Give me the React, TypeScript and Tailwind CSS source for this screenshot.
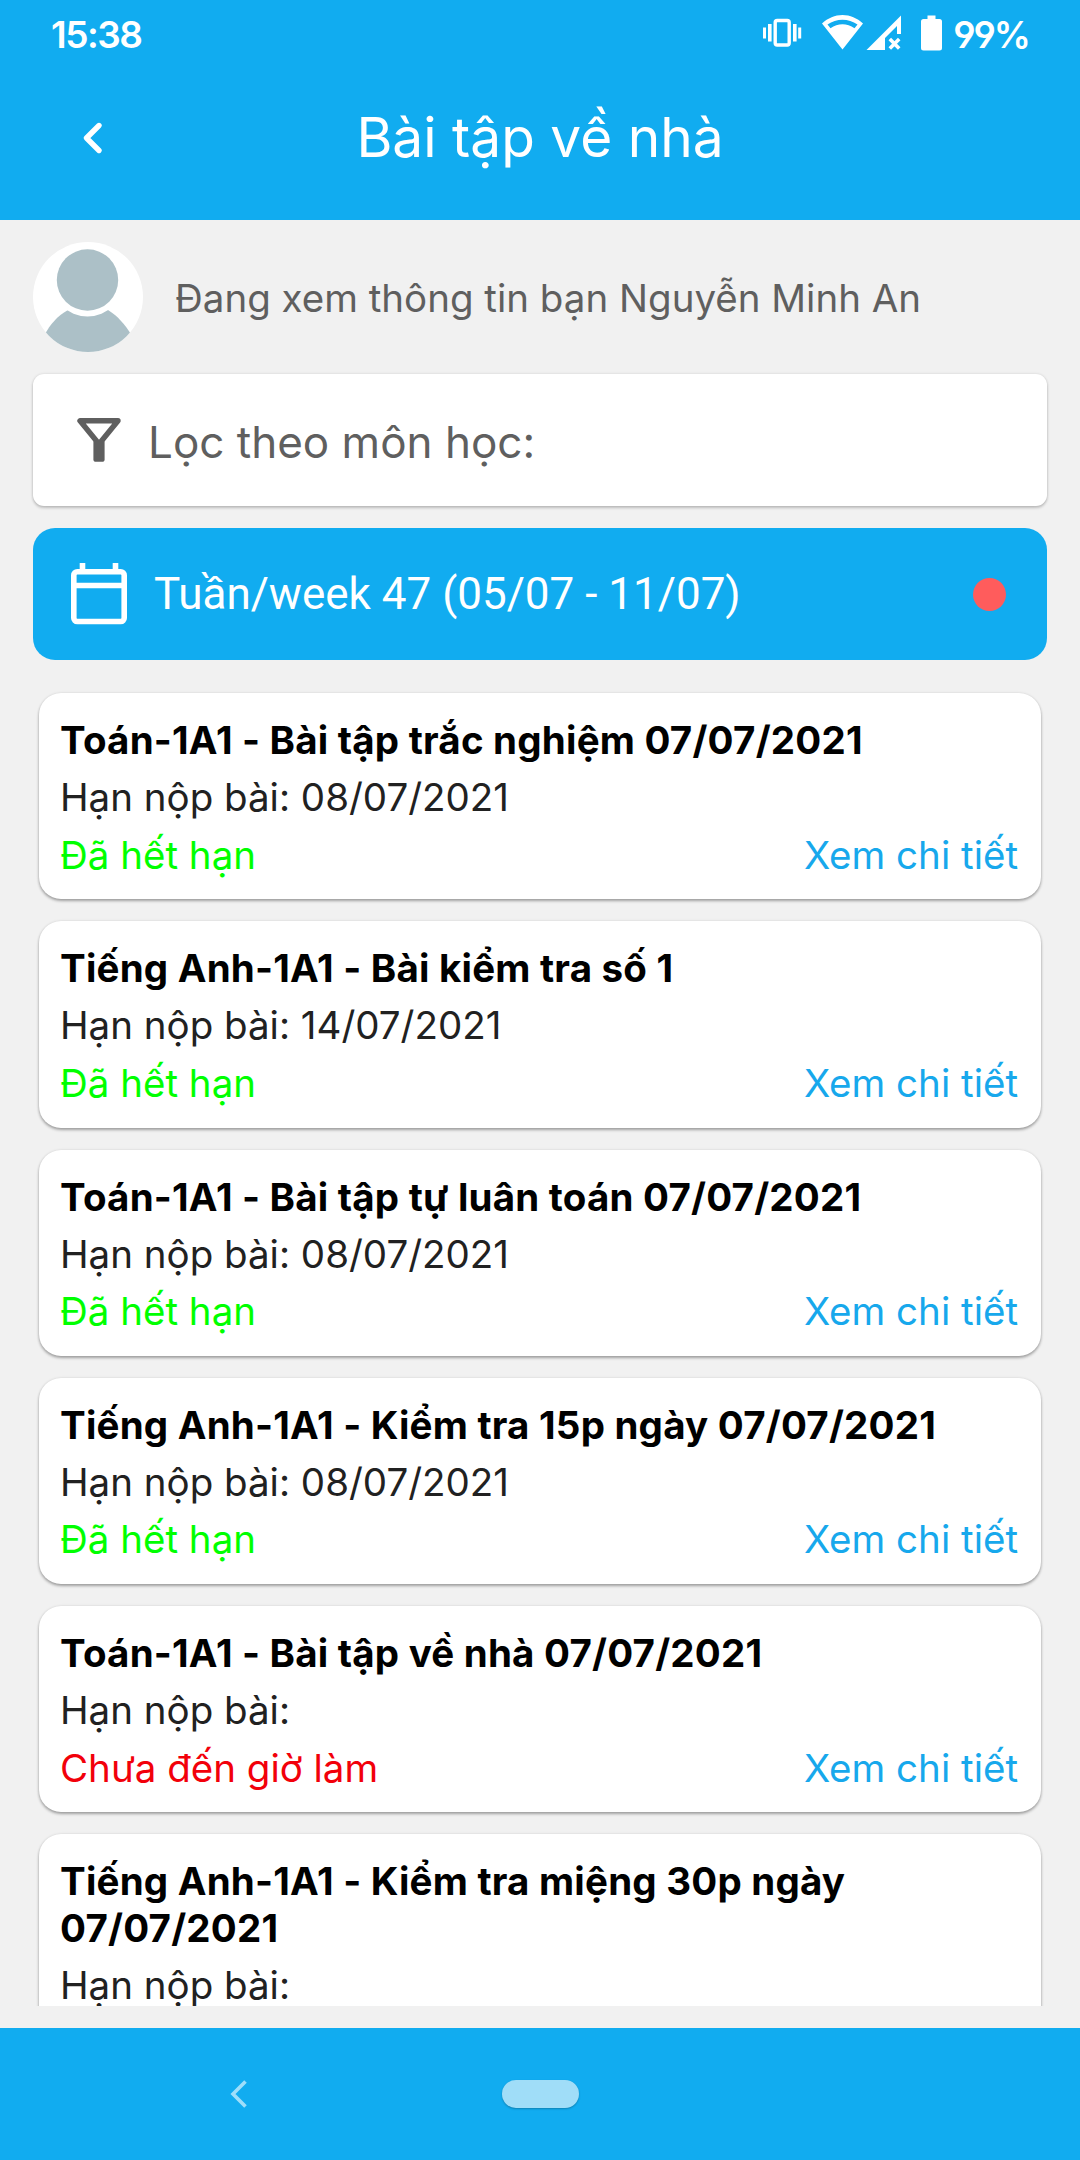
type Homework = {
  title: string;
  deadline: string;
  status: "expired" | "upcoming";
};

const homeworks: Homework[] = [
  { title: "Toán-1A1 - Bài tập trắc nghiệm 07/07/2021", deadline: "08/07/2021", status: "expired" },
  { title: "Tiếng Anh-1A1 - Bài kiểm tra số 1", deadline: "14/07/2021", status: "expired" },
  { title: "Toán-1A1 - Bài tập tự luân toán 07/07/2021", deadline: "08/07/2021", status: "expired" },
  { title: "Tiếng Anh-1A1 - Kiểm tra 15p ngày 07/07/2021", deadline: "08/07/2021", status: "expired" },
  { title: "Toán-1A1 - Bài tập về nhà 07/07/2021", deadline: "", status: "upcoming" },
  { title: "Tiếng Anh-1A1 - Kiểm tra miệng 30p ngày 07/07/2021", deadline: "", status: "upcoming" },
];

const StatusIcons = () => (
  <svg width="182" height="42" viewBox="760 12 182 42" fill="#fff">
    {/* vibrate */}
    <rect x="775.2" y="20.5" width="14" height="24.5" rx="2" fill="none" stroke="#fff" strokeWidth="3.4" />
    <rect x="768" y="24" width="3.6" height="17.5" />
    <rect x="793" y="24" width="3.6" height="17.5" />
    <rect x="763" y="27.5" width="3" height="11" />
    <rect x="798.2" y="27.5" width="3" height="11" />
    {/* wifi */}
    <path
      fillRule="evenodd"
      d="M822 23.5C828 18 835 15 842.5 15S857 18 863 23.5L842.5 49.5ZM827.5 24.5L830.5 28.3C838 22.8 847 22.8 854.5 28.3L857.5 24.5C848.5 18 836.5 18 827.5 24.5Z"
    />
    {/* signal, no data */}
    <path d="M866.5 50L901 15.5V34H897V26L885 38V50Z" />
    <path d="M889.8 39L899.2 48.4M899.2 39L889.8 48.4" stroke="#fff" strokeWidth="3.6" />
    {/* battery */}
    <path d="M927.5 15.5H935.5V19H939.5Q942 19 942 21.5V48Q942 50.5 939.5 50.5H923.5Q921 50.5 921 48V21.5Q921 19 923.5 19H927.5Z" />
  </svg>
);

const BackIcon = () => (
  <svg width="24" height="36" viewBox="0 0 24 36" fill="none">
    <path d="M19 5.5L6.5 18L19 30.5" stroke="#fff" strokeWidth="5.4" strokeLinecap="round" strokeLinejoin="round" />
  </svg>
);

const Avatar = () => (
  <svg width="110" height="110" viewBox="0 0 110 110">
    <defs>
      <clipPath id="avatar-clip">
        <circle cx="55" cy="55" r="55" />
      </clipPath>
    </defs>
    <g clipPath="url(#avatar-clip)">
      <rect width="110" height="110" fill="#fff" />
      <path d="M35 68C24 74 17 83 12 92V110H98V92C92 83 85 74 75 68Z" fill="#acc0c7" />
      <circle cx="54.5" cy="38" r="36.5" fill="#fff" />
      <circle cx="54.5" cy="38" r="30.7" fill="#acc0c7" />
    </g>
  </svg>
);

const FilterIcon = () => (
  <svg width="44" height="46" viewBox="0 0 44 46" fill="none">
    <path d="M3 3.8H41L22 27Z" stroke="#5f5f5f" strokeWidth="5.4" strokeLinejoin="round" />
    <rect x="16.4" y="23" width="11.2" height="21.8" rx="2.6" fill="#5f5f5f" />
  </svg>
);

const CalendarIcon = () => (
  <svg width="56" height="62" viewBox="0 0 56 62" fill="none" stroke="#fff" strokeWidth="5.6">
    <rect x="2.8" y="8.8" width="50.4" height="49.7" rx="3.5" />
    <path d="M3 22.5H53M11.5 0V9M44.5 0V9" />
  </svg>
);

function HomeworkCard({ title, deadline, status }: Homework) {
  return (
    <article className="flex shrink-0 flex-col rounded-[22px] bg-white pt-[24px] pr-[23px] pb-[21px] pl-[21px] shadow-[0_2px_3px_rgba(0,0,0,0.32),0_0_3px_rgba(0,0,0,0.1)]">
      <h2 className="text-[38.5px] leading-[46.5px] font-bold tracking-[0.21px] text-black">{title}</h2>
      <p className="mt-[10.5px] text-[38.5px] leading-[46.75px] text-[#212121]">Hạn nộp bài: {deadline}</p>
      <div className="mt-[10.75px] flex justify-between text-[38.5px] leading-[46.75px]">
        {status === "expired" ? (
          <span className="text-[#00ff00]">Đã hết hạn</span>
        ) : (
          <span className="text-[#f2000a]">Chưa đến giờ làm</span>
        )}
        <a className="text-[#17a8ec]">Xem chi tiết</a>
      </div>
    </article>
  );
}

export default function App() {
  return (
    <div className="flex h-[2160px] w-[1080px] flex-col overflow-hidden bg-[#f1f1f1] font-['Inter',sans-serif]">
      <header className="flex h-[220px] shrink-0 flex-col bg-[#11acf0] text-white">
        <div className="flex h-[66px] items-center justify-between pr-[51px] pl-[51px]">
          <span className="pt-[3px] text-[37px] leading-none font-semibold tracking-[-1.5px]">15:38</span>
          <div className="flex items-center gap-[11px]">
            <StatusIcons />
            <span className="pt-[3px] text-[37px] leading-none font-semibold tracking-[-2px] [font-feature-settings:'ss01']">
              99%
            </span>
          </div>
        </div>
        <div className="grid h-[144px] grid-cols-[240px_1fr_240px] items-center">
          <div className="pl-[80px]">
            <BackIcon />
          </div>
          <h1 className="pb-[2px] text-center text-[55px] leading-[66px]">Bài tập về nhà</h1>
        </div>
      </header>

      <main className="flex min-h-0 flex-1 flex-col px-[33px] pt-[22px] pb-[22px]">
        <div className="flex items-center gap-[32px]">
          <Avatar />
          <span className="pt-[2px] text-[38.5px] leading-[46.7px] text-[#5f5f5f]">
            Đang xem thông tin bạn Nguyễn Minh An
          </span>
        </div>

        <div className="mt-[22px] flex h-[132px] shrink-0 items-center gap-[27px] rounded-[11px] bg-white pl-[44px] shadow-[0_2px_3px_rgba(0,0,0,0.2),0_0_3px_rgba(0,0,0,0.12)]">
          <FilterIcon />
          <span className="pt-1 text-[44px] leading-[54px] text-[#5f5f5f]">Lọc theo môn học:</span>
        </div>

        <div className="mt-[22px] flex h-[132px] shrink-0 items-center rounded-[22px] bg-[#11acf0] pr-[41px] pl-[38px]">
          <CalendarIcon />
          <span className="ml-[27px] flex-1 font-['Roboto',sans-serif] text-[44px] leading-[52px] text-white">
            Tuần/week 47 (05/07 - 11/07)
          </span>
          <span className="size-[33px] rounded-full bg-[#ff5c5c]" />
        </div>

        <section className="-mx-[33px] mt-[11px] flex min-h-0 flex-1 flex-col gap-[22px] overflow-hidden px-[39px] pt-[22px]">
          {homeworks.map((hw) => (
            <HomeworkCard key={hw.title} {...hw} />
          ))}
        </section>
      </main>

      <nav className="grid h-[132px] shrink-0 grid-cols-[502px_77px_1fr] items-center bg-[#11acf0]">
        <svg className="ml-[228px]" width="22" height="32" viewBox="0 0 22 32" fill="none">
          <path d="M17.5 3.5L5 16L17.5 28.5" stroke="#9fdefa" strokeWidth="3.6" />
        </svg>
        <div className="h-[28px] rounded-full bg-[#a0ddf8] shadow-[0_1px_2px_rgba(0,0,0,0.25)]" />
      </nav>
    </div>
  );
}
